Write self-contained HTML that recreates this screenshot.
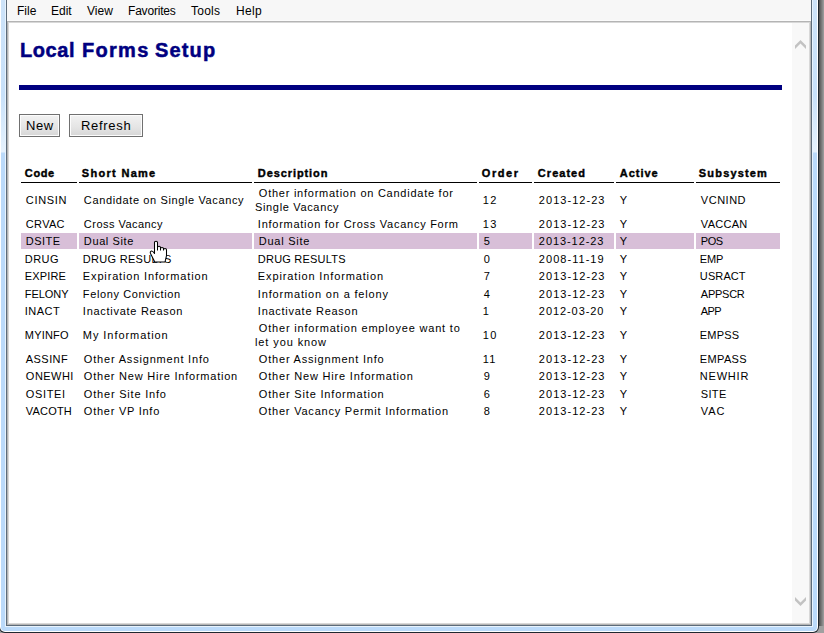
<!DOCTYPE html>
<html><head><meta charset="utf-8">
<style>
html,body{margin:0;padding:0;}
body{width:824px;height:633px;position:relative;overflow:hidden;background:#fff;font-family:"Liberation Sans",sans-serif;}
div{position:absolute;box-sizing:border-box;}
.t{font-size:11.0px;line-height:11.0px;letter-spacing:0.7px;color:#000;white-space:nowrap;}
.h{font-size:11.0px;line-height:11.0px;letter-spacing:0.96px;font-weight:bold;color:#000;white-space:nowrap;-webkit-text-stroke:0.4px #000;}
.hl{top:233px;height:16px;background:#d8bfd8;}
.ul{top:182px;height:1px;background:#000;}
.title{top:39.4px;font-size:20px;line-height:22px;font-weight:bold;color:#000080;white-space:nowrap;-webkit-text-stroke:0.5px #000080;}
.menu{font-size:12px;line-height:12px;color:#000;white-space:nowrap;}
</style></head><body>
<!-- shadow right -->
<div style="left:819px;top:0;width:5px;height:633px;background:linear-gradient(to right,#505050,#a0a0a0);"></div>
<div style="left:0;top:626px;width:824px;height:7px;background:#a0a0a0;"></div>
<!-- window frame -->
<div style="left:-1px;top:0;width:820px;height:633px;border-radius:0 0 6px 6px;background:#202830;"></div>
<div style="left:0;top:0;width:818px;height:632px;border-radius:0 0 5px 5px;background:#ffffff;"></div>
<div style="left:1px;top:0;width:816px;height:631px;border-radius:0 0 4px 4px;background:linear-gradient(to bottom,#cde3f9 0px,#c8e1fa 95px,#e6f2fd 152px,#bbdafa 153px,#bbdafa 633px);"></div>
<div style="left:5px;top:0;width:808px;height:627px;background:#e8f3fd;"></div>
<div style="left:6px;top:0;width:806px;height:626px;background:#5c6b7a;"></div>
<!-- menu bar -->
<div style="left:7px;top:0;width:804px;height:21px;background:#f7f7f7;"></div>
<div style="left:7px;top:20px;width:804px;height:1px;background:#fbfbfb;"></div>
<!-- content inset border -->
<div style="left:7px;top:21px;width:804px;height:604px;background:#b4b4b4;"></div>
<div style="left:8px;top:22px;width:802px;height:602px;background:#d8d8d8;"></div>
<div style="left:9px;top:23px;width:800px;height:600px;background:#ffffff;"></div>
<!-- scrollbar -->
<div style="left:792px;top:23px;width:17px;height:600px;background:#f8f8f8;"></div>
<svg style="position:absolute;left:792px;top:30px" width="17" height="590" viewBox="792 30 17 590"><polygon points="800.5,40 806,45.5 806,49 800.5,43.5 795,49 795,45.5" fill="#c2c2c2"/><polygon points="800.5,606 806,600.5 806,597 800.5,602.5 795,597 795,600.5" fill="#c2c2c2"/></svg>
<!-- menu items -->
<div class="menu" style="left:17px;top:5px">File</div>
<div class="menu" style="left:51px;top:5px">Edit</div>
<div class="menu" style="left:87px;top:5px">View</div>
<div class="menu" style="left:128px;top:5px;letter-spacing:-0.2px">Favorites</div>
<div class="menu" style="left:191px;top:5px;letter-spacing:0.25px">Tools</div>
<div class="menu" style="left:236px;top:5px;letter-spacing:0.3px">Help</div>
<!-- title -->
<div class="title" style="left:20px;letter-spacing:0.550px">Local</div><div class="title" style="left:82px;letter-spacing:1.300px">Forms</div><div class="title" style="left:155px;letter-spacing:1.150px">Setup</div>
<div style="left:19px;top:85px;width:763px;height:5px;background:#000080;"></div>
<!-- buttons -->
<div style="left:19px;top:114px;width:41px;height:23px;border:1px solid #707070;background:linear-gradient(#f2f2f2,#e4e4e4 60%,#d6d6d6);box-shadow:inset 0 0 0 1px #fcfcfc;"></div>
<div class="menu" style="left:26px;top:120px;font-size:13px;letter-spacing:0.55px;">New</div>
<div style="left:69px;top:114px;width:74px;height:23px;border:1px solid #707070;background:linear-gradient(#f2f2f2,#e4e4e4 60%,#d6d6d6);box-shadow:inset 0 0 0 1px #fcfcfc;"></div>
<div class="menu" style="left:81px;top:120px;font-size:13px;letter-spacing:0.7px;">Refresh</div>
<!-- table -->
<div class="hl" style="left:21px;width:56px"></div>
<div class="hl" style="left:79px;width:173px"></div>
<div class="hl" style="left:254px;width:223px"></div>
<div class="hl" style="left:479px;width:53px"></div>
<div class="hl" style="left:534px;width:80px"></div>
<div class="hl" style="left:616px;width:78px"></div>
<div class="hl" style="left:696px;width:84px"></div>
<div class="ul" style="left:21px;width:56px"></div>
<div class="h" style="left:24.87px;top:167.69px;letter-spacing:0.626px">Code</div>
<div class="ul" style="left:79px;width:173px"></div>
<div class="h" style="left:81.87px;top:167.69px;letter-spacing:1.293px">Short Name</div>
<div class="ul" style="left:254px;width:223px"></div>
<div class="h" style="left:257.87px;top:167.69px;letter-spacing:0.900px">Description</div>
<div class="ul" style="left:479px;width:53px"></div>
<div class="h" style="left:481.87px;top:167.69px;letter-spacing:1.560px">Order</div>
<div class="ul" style="left:534px;width:80px"></div>
<div class="h" style="left:537.87px;top:167.69px;letter-spacing:1.028px">Created</div>
<div class="ul" style="left:616px;width:78px"></div>
<div class="h" style="left:619.87px;top:167.69px;letter-spacing:0.960px">Active</div>
<div class="ul" style="left:696px;width:84px"></div>
<div class="h" style="left:698.87px;top:167.69px;letter-spacing:1.164px">Subsystem</div>
<div class="t" style="left:25.87px;top:194.69px;letter-spacing:0.660px">CINSIN</div>
<div class="t" style="left:83.87px;top:194.69px;letter-spacing:0.623px">Candidate on Single Vacancy</div>
<div class="t" style="left:258.87px;top:187.94px;letter-spacing:0.749px">Other information on Candidate for</div>
<div class="t" style="left:255.00px;top:202.19px;letter-spacing:0.658px">Single Vacancy</div>
<div class="t" style="left:482.87px;top:194.69px;letter-spacing:1.200px">12</div>
<div class="t" style="left:538.87px;top:194.69px;letter-spacing:1.034px">2013-12-23</div>
<div class="t" style="left:619.87px;top:194.69px;letter-spacing:0.700px">Y</div>
<div class="t" style="left:700.87px;top:194.69px;letter-spacing:0.500px">VCNIND</div>
<div class="t" style="left:25.87px;top:218.69px;letter-spacing:0.300px">CRVAC</div>
<div class="t" style="left:83.87px;top:218.69px;letter-spacing:0.464px">Cross Vacancy</div>
<div class="t" style="left:257.87px;top:218.69px;letter-spacing:0.737px">Information for Cross Vacancy Form</div>
<div class="t" style="left:482.87px;top:218.69px;letter-spacing:1.200px">13</div>
<div class="t" style="left:538.87px;top:218.69px;letter-spacing:1.034px">2013-12-23</div>
<div class="t" style="left:619.87px;top:218.69px;letter-spacing:0.700px">Y</div>
<div class="t" style="left:700.87px;top:218.69px;letter-spacing:0.260px">VACCAN</div>
<div class="t" style="left:25.87px;top:235.69px;letter-spacing:0.450px">DSITE</div>
<div class="t" style="left:83.87px;top:235.69px;letter-spacing:0.607px">Dual Site</div>
<div class="t" style="left:258.87px;top:235.69px;letter-spacing:0.725px">Dual Site</div>
<div class="t" style="left:483.87px;top:235.69px;letter-spacing:0.700px">5</div>
<div class="t" style="left:538.87px;top:235.69px;letter-spacing:0.922px">2013-12-23</div>
<div class="t" style="left:619.87px;top:235.69px;letter-spacing:0.700px">Y</div>
<div class="t" style="left:700.87px;top:235.69px;letter-spacing:-0.500px">POS</div>
<div class="t" style="left:24.87px;top:253.69px;letter-spacing:0.431px">DRUG</div>
<div class="t" style="left:82.87px;top:253.69px;letter-spacing:0.287px">DRUG RESULTS</div>
<div class="t" style="left:257.87px;top:253.69px;letter-spacing:0.210px">DRUG RESULTS</div>
<div class="t" style="left:483.87px;top:253.69px;letter-spacing:0.700px">0</div>
<div class="t" style="left:538.87px;top:253.69px;letter-spacing:1.033px">2008-11-19</div>
<div class="t" style="left:619.87px;top:253.69px;letter-spacing:0.700px">Y</div>
<div class="t" style="left:699.87px;top:253.69px;letter-spacing:-0.200px">EMP</div>
<div class="t" style="left:24.87px;top:270.69px;letter-spacing:0.140px">EXPIRE</div>
<div class="t" style="left:82.87px;top:270.69px;letter-spacing:0.843px">Expiration Information</div>
<div class="t" style="left:257.87px;top:270.69px;letter-spacing:0.864px">Expiration Information</div>
<div class="t" style="left:483.87px;top:270.69px;letter-spacing:0.700px">7</div>
<div class="t" style="left:538.87px;top:270.69px;letter-spacing:1.034px">2013-12-23</div>
<div class="t" style="left:619.87px;top:270.69px;letter-spacing:0.700px">Y</div>
<div class="t" style="left:699.87px;top:270.69px;letter-spacing:0.100px">USRACT</div>
<div class="t" style="left:24.87px;top:288.69px;letter-spacing:-0.060px">FELONY</div>
<div class="t" style="left:82.87px;top:288.69px;letter-spacing:0.620px">Felony Conviction</div>
<div class="t" style="left:257.87px;top:288.69px;letter-spacing:0.827px">Information on a felony</div>
<div class="t" style="left:483.87px;top:288.69px;letter-spacing:0.700px">4</div>
<div class="t" style="left:538.87px;top:288.69px;letter-spacing:1.034px">2013-12-23</div>
<div class="t" style="left:619.87px;top:288.69px;letter-spacing:0.700px">Y</div>
<div class="t" style="left:700.87px;top:288.69px;letter-spacing:-0.260px">APPSCR</div>
<div class="t" style="left:24.87px;top:305.69px;letter-spacing:0.450px">INACT</div>
<div class="t" style="left:82.87px;top:305.69px;letter-spacing:0.722px">Inactivate Reason</div>
<div class="t" style="left:257.87px;top:305.69px;letter-spacing:0.728px">Inactivate Reason</div>
<div class="t" style="left:482.87px;top:305.69px;letter-spacing:0.700px">1</div>
<div class="t" style="left:538.87px;top:305.69px;letter-spacing:0.922px">2012-03-20</div>
<div class="t" style="left:619.87px;top:305.69px;letter-spacing:0.700px">Y</div>
<div class="t" style="left:700.87px;top:305.69px;letter-spacing:-0.600px">APP</div>
<div class="t" style="left:24.87px;top:329.69px;letter-spacing:0.180px">MYINFO</div>
<div class="t" style="left:82.87px;top:329.69px;letter-spacing:0.931px">My Information</div>
<div class="t" style="left:258.87px;top:322.94px;letter-spacing:0.809px">Other information employee want to</div>
<div class="t" style="left:255.00px;top:337.19px;letter-spacing:0.896px">let you know</div>
<div class="t" style="left:482.87px;top:329.69px;letter-spacing:1.200px">10</div>
<div class="t" style="left:538.87px;top:329.69px;letter-spacing:1.034px">2013-12-23</div>
<div class="t" style="left:619.87px;top:329.69px;letter-spacing:0.700px">Y</div>
<div class="t" style="left:699.87px;top:329.69px;letter-spacing:0.150px">EMPSS</div>
<div class="t" style="left:25.87px;top:353.69px;letter-spacing:0.420px">ASSINF</div>
<div class="t" style="left:83.87px;top:353.69px;letter-spacing:0.810px">Other Assignment Info</div>
<div class="t" style="left:258.87px;top:353.69px;letter-spacing:0.800px">Other Assignment Info</div>
<div class="t" style="left:482.87px;top:353.69px;letter-spacing:1.200px">11</div>
<div class="t" style="left:538.87px;top:353.69px;letter-spacing:1.034px">2013-12-23</div>
<div class="t" style="left:619.87px;top:353.69px;letter-spacing:0.700px">Y</div>
<div class="t" style="left:699.87px;top:353.69px;letter-spacing:0.340px">EMPASS</div>
<div class="t" style="left:25.87px;top:370.69px;letter-spacing:0.460px">ONEWHI</div>
<div class="t" style="left:83.87px;top:370.69px;letter-spacing:0.780px">Other New Hire Information</div>
<div class="t" style="left:258.87px;top:370.69px;letter-spacing:0.804px">Other New Hire Information</div>
<div class="t" style="left:483.87px;top:370.69px;letter-spacing:0.700px">9</div>
<div class="t" style="left:538.87px;top:370.69px;letter-spacing:1.034px">2013-12-23</div>
<div class="t" style="left:619.87px;top:370.69px;letter-spacing:0.700px">Y</div>
<div class="t" style="left:699.87px;top:370.69px;letter-spacing:0.780px">NEWHIR</div>
<div class="t" style="left:25.87px;top:388.69px;letter-spacing:0.620px">OSITEI</div>
<div class="t" style="left:83.87px;top:388.69px;letter-spacing:0.800px">Other Site Info</div>
<div class="t" style="left:258.87px;top:388.69px;letter-spacing:0.821px">Other Site Information</div>
<div class="t" style="left:483.87px;top:388.69px;letter-spacing:0.700px">6</div>
<div class="t" style="left:538.87px;top:388.69px;letter-spacing:1.034px">2013-12-23</div>
<div class="t" style="left:619.87px;top:388.69px;letter-spacing:0.700px">Y</div>
<div class="t" style="left:700.87px;top:388.69px;letter-spacing:0.302px">SITE</div>
<div class="t" style="left:25.87px;top:405.69px;letter-spacing:0.180px">VACOTH</div>
<div class="t" style="left:83.87px;top:405.69px;letter-spacing:0.747px">Other VP Info</div>
<div class="t" style="left:258.87px;top:405.69px;letter-spacing:0.786px">Other Vacancy Permit Information</div>
<div class="t" style="left:483.87px;top:405.69px;letter-spacing:0.700px">8</div>
<div class="t" style="left:538.87px;top:405.69px;letter-spacing:1.034px">2013-12-23</div>
<div class="t" style="left:619.87px;top:405.69px;letter-spacing:0.700px">Y</div>
<div class="t" style="left:700.87px;top:405.69px;letter-spacing:0.900px">VAC</div>
<!-- cursor -->
<svg style="position:absolute;left:148px;top:240px" width="22" height="25" viewBox="0 0 22 25">
<path d="M6.5 13.5 L6.5 2.5 Q6.5 1.2 8 1.2 Q9.5 1.2 9.5 2.5 L9.5 7.5 Q9.5 6.3 11 6.3 Q12.5 6.3 12.5 7.5 L12.5 8.5 Q12.5 7.4 14 7.4 Q15.5 7.4 15.5 8.5 L15.5 9.5 Q15.5 8.5 17 8.5 Q18.5 8.5 18.5 9.7 L18.5 15.5 L17 22 L6.8 22 L2.5 13.5 Q1.8 11.5 3.5 11 Q4.8 10.8 6.5 13.5 Z" fill="#fff" stroke="#000" stroke-width="1.05" stroke-linejoin="round"/>
<path d="M9.5 7.5 L9.5 10.5 M12.5 8.5 L12.5 10.5 M15.5 9.5 L15.5 10.5" stroke="#000" stroke-width="1"/>
</svg>
</body></html>
